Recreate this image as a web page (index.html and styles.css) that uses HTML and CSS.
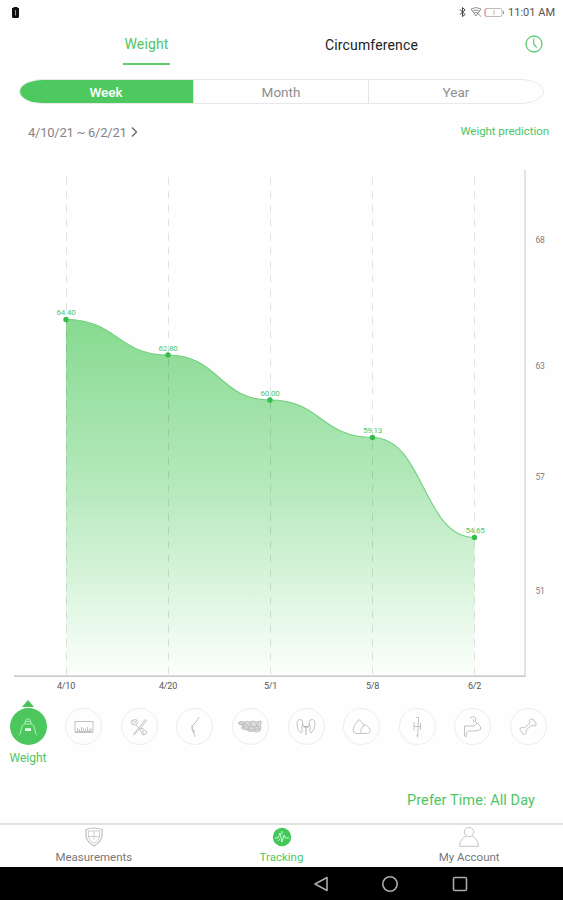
FILE: index.html
```
<!DOCTYPE html>
<html lang="en">

<head>
    <meta charset="UTF-8">
    <meta name="viewport" content="width=device-width, initial-scale=1.0">
    <title>Tracking</title>
    <link rel="stylesheet" href="styles.css">
</head>

<body>
    <div class="status">
        <svg class="sim" width="7" height="11" viewBox="0 0 7 11">
            <path d="M1.5 0h4v1H7v8.500Q7 11 5.500 11h-4Q0 11 0 9.500V1h1.500z" fill="#111" />
            <path d="M3.500 3v5.500" stroke="#999" />
        </svg>
        <div class="status-right">
            <svg width="46" height="12" viewBox="0 0 46 12" fill="none">
                <path d="M1 3.500l5 5-2.500 2v-9L6 4 1 8.500" stroke="#444" />
                <path d="M12 3q5-3 10 0l-5 7zM13.500 5q3.500-2 7 0M15 7q2-1 4 0M18 7l4 3.500" stroke="#777" stroke-width=".8" />
                <rect x="26" y="2.500" width="17" height="8" rx="2" stroke="#bbb" />
                <path d="M28 2.500q-2 0-2 2v4q0 2 2 2" stroke="#ee8585" />
                <path d="M35 4v5" stroke="#bbb" />
                <path d="M44.500 5v3" stroke="#999" />
            </svg>
            <span>11:01 AM</span>
        </div>
    </div>

    <header class="tabs">
        <a class="tab active">Weight</a>
        <a class="tab">Circumference</a>
        <svg class="clock" width="18" height="18" viewBox="0 0 18 18" fill="none" stroke="#60cb76">
            <circle cx="9" cy="9" r="8" stroke-width="1.300" />
            <path d="M8.700 3.500v5.500l3 3.500" stroke-width="1.200" />
        </svg>
    </header>

    <div class="period">
        <button class="period-btn selected">Week</button>
        <button class="period-btn">Month</button>
        <button class="period-btn">Year</button>
    </div>

    <div class="range">
        <div class="range-date">
            <span>4/10/21 ~ 6/2/21</span>
            <svg width="7" height="12" viewBox="0 0 7 12" fill="none" stroke="#666" stroke-width="1.300">
                <path d="M1 1.500L5.500 6 1 10.500" />
            </svg>
        </div>
        <a class="prediction">Weight prediction</a>
    </div>

    <!-- weight chart -->
    <svg class="chart" width="563" height="540" viewBox="0 155 563 540">
        <defs>
            <linearGradient id="fade" gradientUnits="userSpaceOnUse" x1="0" y1="319" x2="0" y2="676">
                <stop offset="0" stop-color="#86da90" />
                <stop offset=".5" stop-color="#b9eabf" />
                <stop offset="1" stop-color="#fcfffc" />
            </linearGradient>
        </defs>
        <path fill="url(#fade)" d="M66 319.500C117 319.500 117 355 168 355S219 400 270 400S321 437.500 372.500 437.500S423 537.500 474.500 537.500V676H66z" />
        <g class="grid">
            <path d="M66.500 177v499" />
            <path d="M168.500 177v499" />
            <path d="M270.500 177v499" />
            <path d="M372.500 177v499" />
            <path d="M474.500 177v499" />
        </g>
        <path class="line" d="M66 319.500C117 319.500 117 355 168 355S219 400 270 400S321 437.500 372.500 437.500S423 537.500 474.500 537.500" />
        <g class="dots">
            <circle cx="66" cy="319.500" r="2.700" />
            <circle cx="168" cy="355" r="2.700" />
            <circle cx="270" cy="400" r="2.700" />
            <circle cx="372.500" cy="437.500" r="2.700" />
            <circle cx="474.500" cy="537.500" r="2.700" />
        </g>
        <g class="values">
            <text x="66" y="315">64.40</text>
            <text x="168" y="350.500">62.80</text>
            <text x="270" y="395.500">60.00</text>
            <text x="372.500" y="433">59.13</text>
            <text x="475" y="533">54.65</text>
        </g>
        <path d="M525 170v506" stroke="#dadada" stroke-width="1.500" />
        <path d="M14 676.200h511.500" stroke="#bababa" stroke-width="1.200" />
        <g class="y-labels">
            <text x="540" y="242.500">68</text>
            <text x="540" y="368.500">63</text>
            <text x="540" y="480">57</text>
            <text x="540" y="594">51</text>
        </g>
        <g class="x-labels">
            <text x="66" y="689">4/10</text>
            <text x="168" y="689">4/20</text>
            <text x="270.500" y="689">5/1</text>
            <text x="372.500" y="689">5/8</text>
            <text x="474.500" y="689">6/2</text>
        </g>
    </svg>

    <div class="metrics">
        <div class="metric current">
            <div class="circle">
                <svg width="22" height="22" viewBox="0 0 22 22">
                    <path d="M1.500 19Q4 18.500 4 14l1.500-4.500Q6 8 8 8h6q2 0 2.500 1.500L18 14q0 4.500 2.500 5M8 8V6l1.500-3h3L14 6v2M8.500 5.500h5" />
                    <path d="M8 13h6M8 14.300h6" stroke="#eaffed" stroke-width="1.300" />
                </svg>
            </div>
            <span>Weight</span>
        </div>
        <div class="metric">
            <div class="circle">
                <svg width="22" height="22" viewBox="0 0 22 22">
                    <path d="M2 5.500h18v11H2z" />
                    <path d="M3 15.500h16M4.500 15v-3M6.500 15v-2M8.500 15v-4M10.500 15v-3M12.500 15v-2M14.500 15v-4M16.500 15v-2M18 15v-3" />
                </svg>
            </div>
        </div>
        <div class="metric">
            <div class="circle">
                <svg width="22" height="22" viewBox="0 0 22 22">
                    <path d="M17.500 3Q13 10 5 18.500M19 4Q14 11 6 19M3 5q3-2 6-1 1 5-2 5-4 0-4-4zM5 6h3M8 9l5 5M12 14l2-2 5 4-1 2-3 1zM15 14v4" />
                </svg>
            </div>
        </div>
        <div class="metric">
            <div class="circle">
                <svg width="22" height="22" viewBox="0 0 22 22">
                    <path d="M15 1q-2 5-5 7t-1 6l2 7M13 5L9 9M8 9v4l1 3M10 14v3" />
                </svg>
            </div>
        </div>
        <div class="metric">
            <div class="circle">
                <svg width="26" height="22" viewBox="0 0 26 22">
                    <path fill="#ddd" d="M1 7q3-3 6-1 3-1 6 0 4-2 6 0l5-1v3l-1 1 1 2-1 4q-4 2-7 0-4 2-6-1-4 0-6-2l3-2z" />
                    <path d="M1 7l9 5M6 6l8 8M12 6l7 9M18 6l5 8M2 8l7 0 5 3 9-1M5 11l8 3 9-1M8 6l-2 6M15 6l-4 8M22 6l-6 9" />
                </svg>
            </div>
        </div>
        <div class="metric">
            <div class="circle">
                <svg width="22" height="22" viewBox="0 0 22 22">
                    <path d="M7 4Q2 2 2 8q0 6 4 9 2-1 1-4-1-3 1-5zM15 4q5-2 5 4 0 6-4 9-2-1-1-4 1-3-1-5z" />
                    <path d="M7 8q1 3 4 3t4-3M11 11v8M8.500 11h5" stroke="#aaa" />
                </svg>
            </div>
        </div>
        <div class="metric">
            <div class="circle">
                <svg width="22" height="22" viewBox="0 0 22 22">
                    <path d="M10.500 17.500H5q-3-1-3-4 1-5 6-10 4 3 5.500 7M10.500 17.500q-2-3 .5-6 1.500-2 3.500-3 4 3 5 6-1 3-3 3z" />
                </svg>
            </div>
        </div>
        <div class="metric">
            <div class="circle">
                <svg width="22" height="22" viewBox="0 0 22 22">
                    <path d="M10 1.500h2.500V7M8 6v8.500M14.500 7v7M8 10.500h6.500M12 7v8.500l-.5 6M12.500 18l-2 2" />
                </svg>
            </div>
        </div>
        <div class="metric">
            <div class="circle">
                <svg width="22" height="22" viewBox="0 0 22 22">
                    <path d="M8 2l3-1.500L13.500 2v3.500l5 5v3L13 15H6.500L4.500 17 4 21l-1.500-1V10H12l3-3M11 3.500l1 3" />
                </svg>
            </div>
        </div>
        <div class="metric">
            <div class="circle">
                <svg width="22" height="22" viewBox="0 0 22 22">
                    <path d="M7 12l6-5q-2-3 1-4 3 0 3 2 3 1 2 4-2 2-4 0l-6 5q2 3-1 4.500-3 0-3-2.500-3-1-2-3.500 2-2 4-.5z" />
                </svg>
            </div>
        </div>
    </div>

    <a class="prefer">Prefer Time: All Day</a>

    <nav class="bottom-nav">
        <div class="nav-item">
            <svg width="20" height="20" viewBox="0 0 20 20" fill="none" stroke="#bcbcbc">
                <path d="M10 1q4 0 8 1.500v7Q17 15 10 19 3 15 2 9.500v-7Q6 1 10 1z" stroke-width="1.200" />
                <path d="M10 4v9M4.500 9.500h11M4.500 4h11v6q-1 4-5.500 6.500Q5.500 14 4.500 10z" stroke-width=".7" />
            </svg>
            <span>Measurements</span>
        </div>
        <div class="nav-item on">
            <svg width="20" height="20" viewBox="0 0 20 20" fill="none">
                <circle cx="10" cy="10" r="9.200" fill="#43c859" />
                <path d="M3 11h3l2-5 2 9 2-7 1.500 3H17M10 4v3M6 14l2-2" stroke="#d6ffdd" stroke-width=".9" />
            </svg>
            <span>Tracking</span>
        </div>
        <div class="nav-item">
            <svg width="22" height="20" viewBox="0 0 22 20" fill="none" stroke="#c4c4c4">
                <circle cx="11" cy="5" r="4.700" />
                <path d="M8 9Q2 12 1.500 19.300h19Q20 12 14 9" />
            </svg>
            <span>My Account</span>
        </div>
    </nav>

    <div class="android-bar">
        <svg width="16" height="18" viewBox="0 0 16 18"><path d="M14 2.500v13L2 9z" /></svg>
        <svg width="18" height="18" viewBox="0 0 18 18"><circle cx="9" cy="9" r="7.200" /></svg>
        <svg width="18" height="18" viewBox="0 0 18 18"><rect x="2.500" y="2.500" width="13" height="13" rx="1.500" /></svg>
    </div>
</body>

</html>
```
FILE: styles.css
```
* {
    box-sizing: border-box;
}

body {
    margin: 0;
    width: 563px;
    height: 900px;
    display: flex;
    flex-direction: column;
    background-color: #fefefe;
    font-family: Roboto, "Liberation Sans", sans-serif;
    overflow: hidden;
}

svg {
    display: block;
    flex-shrink: 0;
}

.status {
    height: 24px;
    padding: 0 8px 0 12px;
    display: flex;
    justify-content: space-between;
    align-items: center;
}

.status-right {
    display: flex;
    align-items: center;
    gap: 3px;
    font-size: 11px;
    color: #555;
}

.tabs {
    height: 42px;
    display: grid;
    grid-template-columns: 47px 95px 18px;
    column-gap: 154px;
    padding-left: 123px;
}

.tab {
    height: 42px;
    padding-top: 13px;
    font-size: 14px;
    line-height: 16px;
    text-align: center;
    letter-spacing: 0.15px;
    color: #222;
}

.tab.active {
    height: 41px;
    padding-top: 12px;
    color: #4fc663;
    border-bottom: 2px solid #62cc74;
}

.clock {
    margin: 11px 0 0 -48px;
}

.period {
    height: 25px;
    margin: 13px 19px 0;
    display: flex;
    border: 1px solid #e8e8e8;
    border-radius: 25px / 13px;
    overflow: hidden;
}

.period-btn {
    flex: 1;
    padding: 0;
    border: 0;
    border-left: 1px solid #e4e4e4;
    background-color: transparent;
    font-family: inherit;
    font-size: 13.5px;
    color: #8e8e8e;
}

.period-btn.selected {
    margin: -1px 0 -1px -1px;
    border: 0;
    background-color: #4ec95f;
    color: white;
    font-weight: 500;
}

.range {
    height: 51px;
    padding: 0 14px 0 28px;
    display: flex;
    justify-content: space-between;
    align-items: center;
}

.range-date {
    display: flex;
    align-items: center;
    gap: 4px;
    padding-top: 5px;
    font-size: 13px;
    letter-spacing: -0.25px;
    color: #858585;
}

.prediction {
    padding-top: 3px;
    font-size: 11.5px;
    letter-spacing: -0.05px;
    color: #4fc663;
}

.chart {
    font-family: Roboto, sans-serif;
}

.grid path {
    stroke: #000;
    stroke-opacity: 0.11;
    stroke-dasharray: 7.5 6.5;
}

.line {
    fill: none;
    stroke: #71cf7e;
    stroke-width: 1.1;
}

.dots {
    fill: #35bd4c;
}

.chart text {
    text-anchor: middle;
    font-size: 8.5px;
    letter-spacing: -0.2px;
}

.chart .values text {
    font-size: 8px;
    fill: #55c668;
}

.y-labels {
    fill: #808080;
}

.x-labels {
    fill: #555;
}

.chart .x-labels text {
    font-size: 9px;
}

.metrics {
    height: 75px;
    margin-top: 5px;
    padding: 8px 16px 0 9.5px;
    display: flex;
    justify-content: space-between;
}

.metric {
    width: 37px;
    display: flex;
    flex-direction: column;
    align-items: center;
}

.circle {
    width: 37px;
    height: 37px;
    flex-shrink: 0;
    display: flex;
    justify-content: center;
    align-items: center;
    border: 1px solid #ededed;
    border-radius: 50%;
}

.circle svg {
    fill: none;
    stroke: #bdbdbd;
    stroke-width: 0.9;
}

.current .circle {
    border: 0;
    background-color: #4bc75d;
}

.current .circle svg {
    stroke: #b9f0c1;
}

/* arrow above the selected metric */
.current::before {
    content: "";
    margin-top: -8px;
    margin-bottom: 1px;
    border: 6.5px solid transparent;
    border-top: 0;
    border-bottom: 7px solid #48c45b;
}

.metric span {
    margin-top: 6px;
    font-size: 12px;
    line-height: 14px;
    color: #4fc663;
}

.prefer {
    margin: 18px 28px 0 0;
    font-size: 14.5px;
    line-height: 16px;
    letter-spacing: 0.08px;
    text-align: right;
    color: #4fc663;
}

.bottom-nav {
    height: 44px;
    margin-top: auto;
    padding-top: 2px;
    display: flex;
    border-top: 2px solid #e2e2e0;
    background-color: white;
}

.nav-item {
    flex: 1;
    display: flex;
    flex-direction: column;
    align-items: center;
    font-size: 11.5px;
    line-height: 14px;
    color: #777;
}

.nav-item span {
    margin-top: 3px;
}

.nav-item.on {
    color: #4fc663;
}

.android-bar {
    height: 33px;
    padding-left: 312.5px;
    display: flex;
    align-items: center;
    gap: 52px;
    background-color: black;
}

.android-bar svg {
    fill: none;
    stroke: #aaa;
    stroke-width: 1.6;
    stroke-linejoin: round;
}
```
